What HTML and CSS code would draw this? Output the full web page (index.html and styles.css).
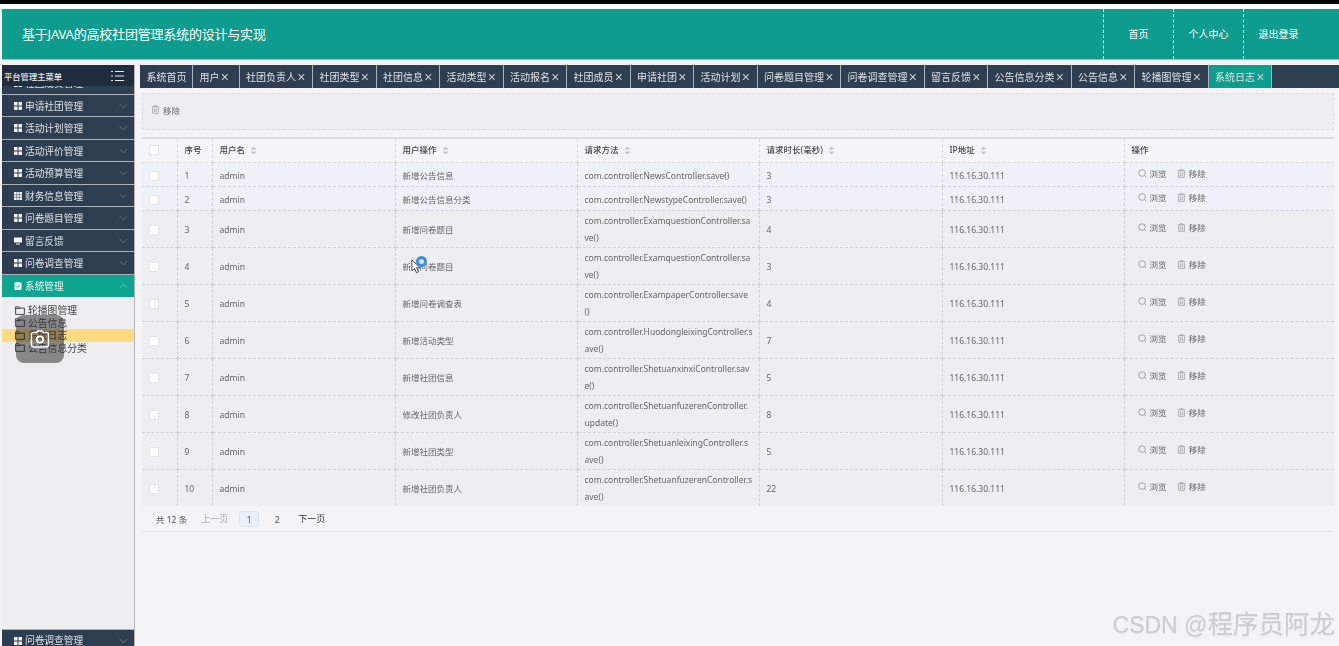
FILE: index.html
```html
<!DOCTYPE html>
<html lang="en">
<head>
    <meta charset="UTF-8">
    <meta name="viewport" content="width=device-width, initial-scale=1.0">
    <title>系统日志</title>
    <link rel="stylesheet" href="styles.css">
</head>
<body>
    <svg class="sprites" aria-hidden="true">
        <symbol id="i-grid" viewBox="1 1 8 8"><path d="M1 1h3.500v3.500H1zM5.500 1H9v3.500H5.500zM1 5.500h3.500V9H1zM5.500 5.500H9V9H5.500z" fill="currentColor"/></symbol>
        <symbol id="i-table" viewBox="1 1 8 8"><path d="M1 1h8v8H1z" fill="currentColor"/><path d="M1 3.700h8M1 6.300h8M3.700 1v8M6.300 1v8" stroke="#2d3e50" stroke-width=".5" fill="none"/></symbol>
        <symbol id="i-screen" viewBox="1 1 8 8"><path d="M1 1.500h8v5H1zM3 7.500h4v1H3z" fill="currentColor"/></symbol>
        <symbol id="i-check" viewBox="1 1 8 8"><path d="M1.500 1.500h7V9h-7z" fill="currentColor"/><path d="M3.500 1h3v1.200h-3z" fill="currentColor"/><path d="M3.200 5.300l1.300 1.300 2.300-2.300" stroke="#0e9c8d" stroke-width=".8" fill="none"/></symbol>
        <symbol id="i-chevron" viewBox="0 0 10 6"><path d="M1 1l4 4 4-4" stroke="currentColor" stroke-width=".8" fill="none"/></symbol>
        <symbol id="i-folder" viewBox="0 0 10 9"><path d="M.6 8.400V.8h3.300l1 1.300h4.500v6.300zM.6 2.600h4.300" stroke="currentColor" stroke-width=".9" fill="none"/></symbol>
        <symbol id="i-trash" viewBox="0 0 10 10"><path d="M.8 2h8.400M3.500 2V.8h3V2M1.800 2.800v6.400h6.400V2.800M4 3.800v4M6 3.800v4" stroke="currentColor" stroke-width=".7" fill="none"/></symbol>
        <symbol id="i-search" viewBox="0 0 10 10"><circle cx="4.500" cy="4.500" r="3.700" stroke="currentColor" stroke-width=".8" fill="none"/><path d="M7.200 7.200l2 2" stroke="currentColor" stroke-width=".8"/></symbol>
        <symbol id="i-sort" viewBox="0 0 7 9"><path d="M3.500.5L6.500 3.500H.5zM3.500 8.500L.5 5.500h6z" fill="currentColor"/></symbol>
    </svg>

    <div class="top-strip"></div>

    <header class="header">
        <div class="header-title">基于JAVA的高校社团管理系统的设计与实现</div>
        <nav class="header-nav">
            <a>首页</a>
            <a>个人中心</a>
            <a>退出登录</a>
        </nav>
    </header>

    <div class="layout">
        <aside class="sidebar">
            <div class="side-title">
                <span>平台管理主菜单</span>
                <svg class="burger" viewBox="0 0 13 10"><path d="M0 .5h2M4 .5h9M0 5h2M4 5h9M0 9.500h2M4 9.500h9" stroke="currentColor" stroke-width="1" fill="none"/></svg>
            </div>
            <div class="menu">
                <div class="menu-item first-item"><svg class="m-icon"><use href="#i-grid"/></svg>社团成员管理<svg class="m-arrow"><use href="#i-chevron"/></svg></div>
                <div class="menu-item"><svg class="m-icon"><use href="#i-grid"/></svg>申请社团管理<svg class="m-arrow"><use href="#i-chevron"/></svg></div>
                <div class="menu-item"><svg class="m-icon"><use href="#i-grid"/></svg>活动计划管理<svg class="m-arrow"><use href="#i-chevron"/></svg></div>
                <div class="menu-item"><svg class="m-icon"><use href="#i-grid"/></svg>活动评价管理<svg class="m-arrow"><use href="#i-chevron"/></svg></div>
                <div class="menu-item"><svg class="m-icon"><use href="#i-grid"/></svg>活动预算管理<svg class="m-arrow"><use href="#i-chevron"/></svg></div>
                <div class="menu-item"><svg class="m-icon"><use href="#i-table"/></svg>财务信息管理<svg class="m-arrow"><use href="#i-chevron"/></svg></div>
                <div class="menu-item"><svg class="m-icon"><use href="#i-grid"/></svg>问卷题目管理<svg class="m-arrow"><use href="#i-chevron"/></svg></div>
                <div class="menu-item"><svg class="m-icon"><use href="#i-screen"/></svg>留言反馈<svg class="m-arrow"><use href="#i-chevron"/></svg></div>
                <div class="menu-item"><svg class="m-icon"><use href="#i-grid"/></svg>问卷调查管理<svg class="m-arrow"><use href="#i-chevron"/></svg></div>
                <div class="menu-item active"><svg class="m-icon"><use href="#i-check"/></svg>系统管理<svg class="m-arrow up"><use href="#i-chevron"/></svg></div>
                <ul class="sub-menu">
                    <li><svg class="s-icon"><use href="#i-folder"/></svg>轮播图管理</li>
                    <li><svg class="s-icon"><use href="#i-folder"/></svg>公告信息</li>
                    <li class="current"><svg class="s-icon"><use href="#i-folder"/></svg>系统日志</li>
                    <li><svg class="s-icon"><use href="#i-folder"/></svg>公告信息分类</li>
                </ul>
            </div>
            <div class="menu-item last-item"><svg class="m-icon"><use href="#i-grid"/></svg>问卷调查管理<svg class="m-arrow"><use href="#i-chevron"/></svg></div>
        </aside>

        <main class="main">
            <div class="tabs">
                <a class="tab tab-home">系统首页</a>
                <a class="tab">用户<i>×</i></a>
                <a class="tab">社团负责人<i>×</i></a>
                <a class="tab">社团类型<i>×</i></a>
                <a class="tab">社团信息<i>×</i></a>
                <a class="tab">活动类型<i>×</i></a>
                <a class="tab">活动报名<i>×</i></a>
                <a class="tab">社团成员<i>×</i></a>
                <a class="tab">申请社团<i>×</i></a>
                <a class="tab">活动计划<i>×</i></a>
                <a class="tab">问卷题目管理<i>×</i></a>
                <a class="tab">问卷调查管理<i>×</i></a>
                <a class="tab">留言反馈<i>×</i></a>
                <a class="tab">公告信息分类<i>×</i></a>
                <a class="tab">公告信息<i>×</i></a>
                <a class="tab">轮播图管理<i>×</i></a>
                <a class="tab tab-active">系统日志<i>×</i></a>
            </div>

            <div class="content">
                <div class="toolbar">
                    <span class="action"><svg class="a-icon"><use href="#i-trash"/></svg>移除</span>
                </div>

                <div class="table-box">
                    <table class="log-table">
                        <colgroup>
                            <col class="c-check"><col class="c-no"><col class="c-wide"><col class="c-mid"><col class="c-mid"><col class="c-wide"><col class="c-mid"><col>
                        </colgroup>
                        <thead>
                            <tr>
                                <th><span class="box"></span></th>
                                <th>序号</th>
                                <th>用户名<svg class="sort"><use href="#i-sort"/></svg></th>
                                <th>用户操作<svg class="sort"><use href="#i-sort"/></svg></th>
                                <th>请求方法<svg class="sort"><use href="#i-sort"/></svg></th>
                                <th>请求时长(毫秒)<svg class="sort"><use href="#i-sort"/></svg></th>
                                <th>IP地址<svg class="sort"><use href="#i-sort"/></svg></th>
                                <th>操作</th>
                            </tr>
                        </thead>
                        <tbody id="log-body"></tbody>
                    </table>
                    <div class="pager">
                        <span class="total">共 12 条</span>
                        <span class="prev">上一页</span>
                        <span class="page page-on">1</span>
                        <span class="page">2</span>
                        <span class="next">下一页</span>
                    </div>
                </div>
            </div>
        </main>
    </div>

    <!-- screen recorder overlays -->
    <div class="camera-badge">
        <svg viewBox="0 0 20 18"><path d="M6.500 2.500l1.500-1.500h4l1.500 1.500h3a2 2 0 0 1 2 2v10.500a2 2 0 0 1-2 2h-13a2 2 0 0 1-2-2v-10.500a2 2 0 0 1 2-2z" stroke="#fff" stroke-width="1.400" fill="none"/><circle cx="10" cy="9.500" r="3.200" stroke="#fff" stroke-width="1.800" fill="none"/></svg>
    </div>
    <div class="cursor">
        <svg viewBox="0 0 12 17"><path d="M1 1v12l3-2.600 2 4.600 2.200-1-2-4.500h4z" fill="#fff" stroke="#333" stroke-width=".9"/></svg>
    </div>
    <div class="cursor-ring"></div>
    <div class="watermark">CSDN @<span>程序员阿龙</span></div>

    <script>
        const logs = [
            ['新增公告信息', 'com.controller.NewsController.save()', 3],
            ['新增公告信息分类', 'com.controller.NewstypeController.save()', 3],
            ['新增问卷题目', 'com.controller.ExamquestionController.save()', 4],
            ['新增问卷题目', 'com.controller.ExamquestionController.save()', 3],
            ['新增问卷调查表', 'com.controller.ExampaperController.save()', 4],
            ['新增活动类型', 'com.controller.HuodongleixingController.save()', 7],
            ['新增社团信息', 'com.controller.ShetuanxinxiController.save()', 5],
            ['修改社团负责人', 'com.controller.ShetuanfuzerenController.update()', 8],
            ['新增社团类型', 'com.controller.ShetuanleixingController.save()', 5],
            ['新增社团负责人', 'com.controller.ShetuanfuzerenController.save()', 22]
        ];

        const body = document.getElementById('log-body');
        logs.forEach((log, i) => {
            const tr = document.createElement('tr');
            if (i < 2) tr.className = 'short-row';
            tr.innerHTML = `
                <td><span class="box"></span></td>
                <td>${i + 1}</td>
                <td>admin</td>
                <td>${log[0]}</td>
                <td class="method">${log[1]}</td>
                <td>${log[2]}</td>
                <td>116.16.30.111</td>
                <td class="ops">
                    <span class="action"><svg class="a-icon"><use href="#i-search"/></svg>浏览</span>
                    <span class="action"><svg class="a-icon"><use href="#i-trash"/></svg>移除</span>
                </td>`;
            body.appendChild(tr);
        });
    </script>
</body>
</html>
```

FILE: styles.css
```css
* {
    box-sizing: border-box;
}

html, body {
    height: 646px;
    overflow: hidden;
}

body {
    margin: 0;
    padding: 0;
    position: relative;
    background-color: #f4f4f7;
    font-family: "Noto Sans", "Noto Sans CJK SC", sans-serif;
    font-size: 8.5px;
    color: #666;
    /* the reference is a soft video frame */
    filter: blur(0.35px);
}

.sprites {
    display: none;
}

.top-strip {
    height: 9px;
    background: #fff;
    border-top: 4px solid #000;
}

/* header */
.header {
    display: flex;
    justify-content: space-between;
    height: 51px;
    margin-left: 2px;
    background-color: #0e9c8d;
    border-bottom: 1px solid #8fc9c2;
    color: #fff;
}

.header-title {
    padding-left: 20px;
    font-size: 13px;
    line-height: 51px;
    letter-spacing: -0.2px;
}

.header-nav {
    display: flex;
    padding-right: 26px;
}

.header-nav a {
    width: 70px;
    border-left: 1px dashed #cfe9e6;
    font-size: 10px;
    line-height: 51px;
    text-align: center;
}

.layout {
    display: flex;
    height: 581px;
    margin-top: 5px;
}

/* sidebar */
.sidebar {
    display: flex;
    flex-direction: column;
    flex: none;
    width: 133px;
    margin-left: 2px;
    background-color: #eeeef0;
    border-right: 1px solid #b4b4b8;
    overflow: hidden;
}

.side-title {
    position: relative;
    z-index: 1;
    display: flex;
    flex: none;
    align-items: center;
    justify-content: space-between;
    height: 21px;
    padding: 0 10px 0 2px;
    background-color: #1f2d3f;
    color: #e8e8ea;
    font-size: 8.3px;
    font-weight: 500;
}

.burger {
    width: 13px;
    height: 10px;
}

.menu {
    flex: 1;
    min-height: 0;
}

.menu-item {
    display: flex;
    align-items: center;
    height: 22.5px;
    padding-left: 12px;
    padding-top: 1px;
    background-color: #2d3e50;
    border-bottom: 1px solid #aab2bb;
    color: #dfe2e6;
    font-size: 9.7px;
}

.first-item {
    margin-top: -14px;
}

.last-item {
    flex: none;
    border-top: 1px solid #aab2bb;
    border-bottom: 0;
    height: 17px;
    padding-top: 0;
    align-items: flex-start;
    line-height: 22px;
}

.last-item .m-icon {
    margin-top: 7px;
}

.last-item .m-arrow {
    margin-top: 8px;
}

.menu-item.active {
    background-color: #0ea58f;
    border-bottom: 0;
    color: #eef8f6;
}

.m-icon {
    flex: none;
    width: 8px;
    height: 8px;
    margin-right: 3px;
    color: #f2f3f5;
}

.m-arrow {
    flex: none;
    width: 9px;
    height: 6px;
    margin-left: auto;
    margin-right: 6px;
    color: #7f8c9a;
}

.m-arrow.up {
    transform: rotate(180deg);
    color: #7fd0c4;
}

.sub-menu {
    margin: 0;
    padding: 7px 0 0;
    list-style-type: none;
}

.sub-menu li {
    display: flex;
    align-items: center;
    height: 12.5px;
    padding-left: 13px;
    color: #444;
    font-size: 9.8px;
}

.sub-menu li.current {
    background-color: #ffdc82;
}

.s-icon {
    flex: none;
    width: 10px;
    height: 9px;
    margin-right: 3px;
    color: #333;
}

/* tabs */
.main {
    flex: 1;
    min-width: 0;
    margin-left: 5px;
}

.tabs {
    display: flex;
    height: 23px;
    background-color: #2d3e50;
}

.tab {
    display: flex;
    align-items: center;
    min-width: 46.5px;
    padding: 0 6.5px;
    border-right: 1px solid #a9b2bb;
    color: #dfe2e6;
    font-size: 10px;
    white-space: nowrap;
}

.tab i {
    width: 8.5px;
    margin-left: 1px;
    font-family: "Liberation Sans", sans-serif;
    font-size: 14px;
    font-style: normal;
    line-height: 1;
    text-align: center;
    color: #c8ced4;
}

.tab-home {
    padding-right: 5.5px;
}

.tab-active {
    background-color: #0e9c8d;
}

/* content */
.content {
    padding: 5px 5px 0 2px;
}

.toolbar {
    display: flex;
    align-items: center;
    height: 37px;
    padding: 0 0 4px 8px;
    background-color: #eeeef0;
    border: 1px dashed #dcdcdf;
}

.action {
    display: inline-flex;
    align-items: center;
    color: #666;
}

.a-icon {
    width: 9px;
    height: 9px;
    margin-right: 3px;
    color: #888;
}

.table-box {
    margin-top: 7px;
    border-bottom: 1px solid #e4e4e7;
}

.log-table {
    width: 100%;
    table-layout: fixed;
    border-collapse: collapse;
    border-top: 2px solid #dcdcdf;
}

.c-check, .c-no {
    width: 35px;
}

.c-wide {
    width: 183px;
}

.c-mid {
    width: 182px;
}

.log-table th {
    height: 24px;
    padding: 0 6px 2px 7px;
    background-color: #f5f4f7;
    border: 1px dashed #d8d8db;
    border-top: 0;
    color: #444;
    font-weight: 500;
    text-align: left;
}

.log-table td {
    height: 37px;
    padding: 1px 6px 0 7px;
    background-color: #eeeef0;
    border: 1px dashed #d2d2d5;
    line-height: 17px;
}

.log-table tr:last-child td {
    border-bottom: 0;
}

.log-table th:first-child, .log-table td:first-child {
    border-left: 0;
}

.log-table th:last-child, .log-table td:last-child {
    border-right: 0;
}

.log-table .short-row td {
    height: 24px;
    padding-top: 2px;
    background-color: #eef1f7;
}

.method {
    word-break: break-all;
}

.log-table .ops {
    padding: 0 0 2px 13px;
}

.log-table .short-row .ops {
    padding: 0 0 1px 13px;
}

.ops .action {
    margin-right: 8px;
}

.box {
    display: inline-block;
    width: 10px;
    height: 10px;
    background-color: #fff;
    border: 1px solid #e6e6e9;
    vertical-align: middle;
}

.sort {
    width: 7px;
    height: 9px;
    margin-left: 5px;
    color: #c4c4c8;
    vertical-align: -1.5px;
}

/* pagination */
.pager {
    display: flex;
    align-items: center;
    height: 25px;
    padding-left: 14px;
    color: #555;
}

.total {
    margin-right: 14px;
}

.prev {
    margin-right: 11px;
    color: #aaa;
}

.page {
    width: 20px;
    height: 16px;
    margin-right: 8px;
    line-height: 18px;
    text-align: center;
}

.page-on {
    background-color: #e9eff8;
    border: 1px solid #dde4ee;
    border-radius: 3px;
    line-height: 16px;
}

.next {
    margin-left: 3px;
    color: #333;
}

.prev, .next {
    font-size: 9px;
}

/* overlays from the screen recording */
.camera-badge {
    position: absolute;
    left: 16px;
    top: 315px;
    display: flex;
    align-items: center;
    justify-content: center;
    width: 48px;
    height: 48px;
    background-color: rgba(40, 40, 40, 0.52);
    border-radius: 8px;
}

.camera-badge svg {
    width: 20px;
    height: 18px;
}

.cursor {
    position: absolute;
    left: 411px;
    top: 259px;
    width: 11px;
    height: 16px;
}

.cursor svg {
    display: block;
}

.cursor-ring {
    position: absolute;
    left: 416px;
    top: 256px;
    width: 11px;
    height: 11px;
    border: 3px solid #3b8fdc;
    border-radius: 50%;
    background-color: #cfe4f7;
}

.watermark {
    position: absolute;
    right: 4px;
    top: 606px;
    color: #cdcdd0;
    font-family: "Liberation Sans", sans-serif;
    font-size: 23px;
    line-height: 32px;
    white-space: nowrap;
    text-shadow: 0 1px 1px #e3e3e6;
}

.watermark span {
    font-family: "Noto Sans CJK SC", sans-serif;
    font-size: 25.5px;
}
```
